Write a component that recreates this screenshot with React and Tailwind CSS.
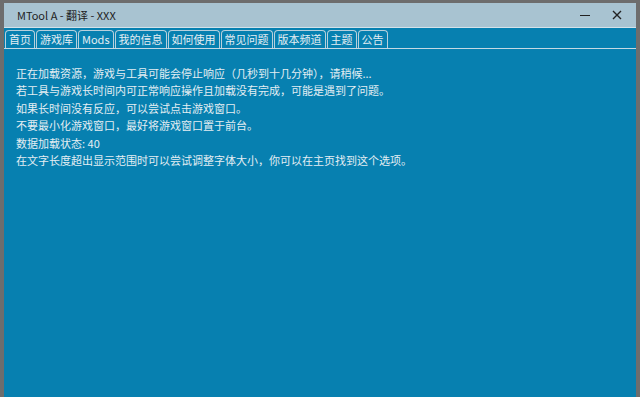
export default function App() {
  const tabs = ["首页", "游戏库", "Mods", "我的信息", "如何使用", "常见问题", "版本频道", "主题", "公告"];
  const lines = [
    "正在加载资源，游戏与工具可能会停止响应（几秒到十几分钟），请稍候...",
    "若工具与游戏长时间内可正常响应操作且加载没有完成，可能是遇到了问题。",
    "如果长时间没有反应，可以尝试点击游戏窗口。",
    "不要最小化游戏窗口，最好将游戏窗口置于前台。",
    "数据加载状态: 40",
    "在文字长度超出显示范围时可以尝试调整字体大小，你可以在主页找到这个选项。",
  ];
  const font = { fontFamily: '"Noto Sans CJK SC", "Noto Sans", sans-serif' };
  return (
    <div className="w-[640px] h-[397px] bg-[#6d6d6d] pl-[4px] pr-[4px] pt-[3px] flex flex-col" style={font}>
      <div className="h-[24px] bg-[#a8c3d1] flex items-center pl-[13px] pr-[10px] shrink-0">
        <span className="text-[11px] text-[#1e1e1e] leading-none">MTool A - 翻译 - XXX</span>
        <div className="flex-1" />
        <span className="w-[10px] h-[1px] bg-[#222] mr-[22px]" />
        <svg width="10" height="10" viewBox="0 0 10 10" className="mr-[4px]">
          <path d="M1 1 L9 9 M9 1 L1 9" stroke="#222" strokeWidth="1.4" />
        </svg>
      </div>
      <div className="h-[1px] bg-[#d3e2ea] shrink-0" />
      <div className="h-[20px] bg-[#0780b0] flex items-end pl-[1px] gap-[1px] shrink-0">
        {tabs.map((t) => (
          <div
            key={t}
            className="h-[18px] px-[3px] border border-b-0 border-[#b8d0dc] rounded-t-[4px] flex items-center text-[11px] text-[#e4eef3] leading-none"
          >
            {t}
          </div>
        ))}
      </div>
      <div className="h-[1px] bg-[#c5d9e3] shrink-0" />
      <div className="flex-1 bg-[#0780b0] pl-[12px] pt-[16px] flex flex-col text-[11px] text-[#e4eef3]">
        {lines.map((l) => (
          <div key={l} className="h-[17.4px] leading-[17.4px] whitespace-nowrap">{l}</div>
        ))}
      </div>
    </div>
  );
}
